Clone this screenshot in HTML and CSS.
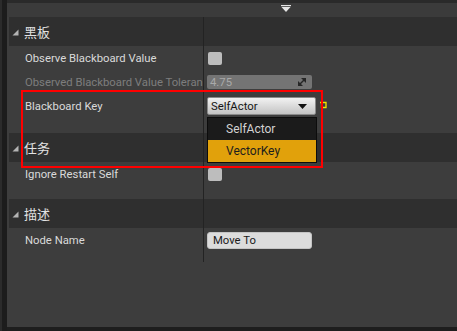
FILE: index.html
```html
<!DOCTYPE html>
<html>
<head>
<meta charset="utf-8">
<link rel="stylesheet" href="styles.css">
</head>
<body>
<div class="window">
  <div class="edge"></div>
  <div class="main">
    <div class="topbar">
      <svg class="collapse-icon" width="10" height="8" viewBox="0 0 10 8"><rect x="0" y="0" width="10" height="1.2" fill="#e6e6e6"/><polygon points="0.5,2 9.5,2 5,7" fill="#e6e6e6"/></svg>
    </div>
    <div class="details">
      <section class="category">
        <div class="cat-header">
          <div class="cat-name"><svg class="tri" width="7" height="7" viewBox="0 0 7 7"><polygon points="6.5,0.5 6.5,6.5 0.5,6.5" fill="#b4b4b4"/></svg><span>黑板</span></div>
          <div class="cat-val"></div>
        </div>
        <div class="prop">
          <div class="pname">Observe Blackboard Value</div>
          <div class="pval"><span class="check"></span></div>
        </div>
        <div class="prop disabled">
          <div class="pname">Observed Blackboard Value Toleran</div>
          <div class="pval">
            <div class="numbox">
              <span>4.75</span>
              <svg class="spin" width="8" height="8" viewBox="0 0 8 8"><polygon points="3,0 8,0 8,5" fill="#262626"/><polygon points="0,3 0,8 5,8" fill="#262626"/><polygon points="6,1 7,2 2,7 1,6" fill="#262626"/></svg>
            </div>
          </div>
        </div>
        <div class="prop">
          <div class="pname">Blackboard Key</div>
          <div class="pval">
            <div class="combo">
              <span>SelfActor</span>
              <svg class="arrow" width="9" height="5" viewBox="0 0 9 5"><polygon points="0,0 9,0 4.5,5" fill="#111"/></svg>
              <div class="menu">
                <div class="item">SelfActor</div>
                <div class="item selected">VectorKey</div>
              </div>
            </div>
            <svg class="reset" width="7" height="8" viewBox="0 0 7 8"><path d="M1.5 1.5 H6 V6.5 H1.5 Z" fill="none" stroke="#f2e600" stroke-width="1.3"/><path d="M0 1.5 H2" stroke="#f2e600" stroke-width="1.3"/></svg>
          </div>
        </div>
        <div class="spacer s15"><div></div><div class="pval"></div></div>
      </section>

      <section class="category">
        <div class="cat-header">
          <div class="cat-name"><svg class="tri" width="7" height="7" viewBox="0 0 7 7"><polygon points="6.5,0.5 6.5,6.5 0.5,6.5" fill="#b4b4b4"/></svg><span>任务</span></div>
          <div class="cat-val"></div>
        </div>
        <div class="prop">
          <div class="pname">Ignore Restart Self</div>
          <div class="pval"><span class="check"></span></div>
        </div>
        <div class="spacer s13"><div></div><div class="pval"></div></div>
      </section>

      <section class="category">
        <div class="cat-header">
          <div class="cat-name"><svg class="tri" width="7" height="7" viewBox="0 0 7 7"><polygon points="6.5,0.5 6.5,6.5 0.5,6.5" fill="#b4b4b4"/></svg><span>描述</span></div>
          <div class="cat-val"></div>
        </div>
        <div class="prop">
          <div class="pname">Node Name</div>
          <div class="pval"><div class="textbox">Move To</div></div>
        </div>
        <div class="spacer s10"><div></div><div class="pval"></div></div>
      </section>
    </div>
    <div class="bottom"></div>
  </div>
  <div class="highlight"></div>
</div>
</body>
</html>
```
FILE: styles.css
```css
* { box-sizing: border-box; }
html, body { margin: 0; padding: 0; background: #1e1e1e; }
body { font-family: Roboto, "Noto Sans", sans-serif; }

.window {
  width: 457px;
  height: 331px;
  display: flex;
  position: relative;
  overflow: hidden;
  background: #1e1e1e;
}

.edge {
  width: 7px;
  flex: none;
  background: linear-gradient(to right, #2b2b2b 0 2px, #1c1c1c 2px);
}

.main {
  flex: 1;
  display: flex;
  flex-direction: column;
}

.topbar {
  height: 17px;
  flex: none;
  border-top: 3px solid #2a2a2a;
  background: #3b3b3b;
  padding-left: 274px;
  padding-top: 2px;
  display: flex;
  align-items: flex-start;
}

.collapse-icon { display: block; }

.details {
  flex: 1;
  background: #3d3d3d;
}

.bottom {
  height: 4px;
  flex: none;
  background: #1e1e1e;
}

.cat-header {
  margin-left: 2px;
  height: 29px;
  display: grid;
  grid-template-columns: 194px 1fr;
  background: #2f2f2f;
}

.cat-name {
  display: flex;
  align-items: center;
  padding-left: 3px;
  gap: 5px;
  font-family: "Noto Sans CJK SC", sans-serif;
  font-size: 13px;
  color: #e2e2e2;
}

.tri { display: block; margin-top: 2px; }

.cat-val { border-left: 1px solid #232323; }

.prop {
  height: 24px;
  display: grid;
  grid-template-columns: 196px 1fr;
}

.pname {
  display: flex;
  align-items: center;
  padding-left: 18px;
  font-size: 11.3px;
  color: #dadada;
  white-space: nowrap;
  overflow: hidden;
}

.prop.disabled .pname { color: #7d7d7d; }

.pval {
  border-left: 1px solid #232323;
  padding-left: 3px;
  display: flex;
  align-items: center;
}

.spacer {
  display: grid;
  grid-template-columns: 196px 1fr;
}
.s15 { height: 15px; }
.s13 { height: 13px; }
.s10 { height: 10px; }

.check {
  width: 14px;
  height: 13px;
  margin-left: 1px;
  border-radius: 2px;
  background: #bdbdbd;
}

.numbox {
  width: 105px;
  height: 14px;
  border-radius: 2px;
  background: #747474;
  display: flex;
  align-items: center;
  justify-content: space-between;
  padding: 0 6px 0 3px;
  font-size: 11.3px;
  color: #a9a9a9;
}

.spin { display: block; }

.combo {
  position: relative;
  width: 109px;
  height: 18px;
  border: 1px solid #8a8a8a;
  border-radius: 2px;
  background: linear-gradient(#f2f2f2, #d8d8d8 55%, #c4c4c4);
  display: flex;
  align-items: center;
  justify-content: space-between;
  padding: 0 8px 0 3px;
  font-size: 11.3px;
  color: #151515;
}

.arrow { display: block; }

.menu {
  position: absolute;
  top: 19px;
  left: -1px;
  width: 110px;
  background: #1b1b1b;
  border: 1px solid #0c0c0c;
  z-index: 2;
}

.item {
  height: 22px;
  display: flex;
  align-items: center;
  padding-left: 18px;
  font-size: 12px;
  color: #d2d2d2;
}

.item.selected {
  background: #e1a10b;
  color: #1d1d1d;
}

.reset { display: block; margin-left: 4px; margin-top: -3px; }

.textbox {
  width: 105px;
  height: 17px;
  border-radius: 3px;
  background: #dcdcdc;
  border: 1px solid #c4c4c4;
  display: flex;
  align-items: center;
  padding-left: 5px;
  font-size: 11.3px;
  color: #1a1a1a;
}

.highlight {
  position: absolute;
  left: 21px;
  top: 90px;
  width: 302px;
  height: 78px;
  border: 2px solid #ff0000;
  z-index: 3;
  pointer-events: none;
}
```
